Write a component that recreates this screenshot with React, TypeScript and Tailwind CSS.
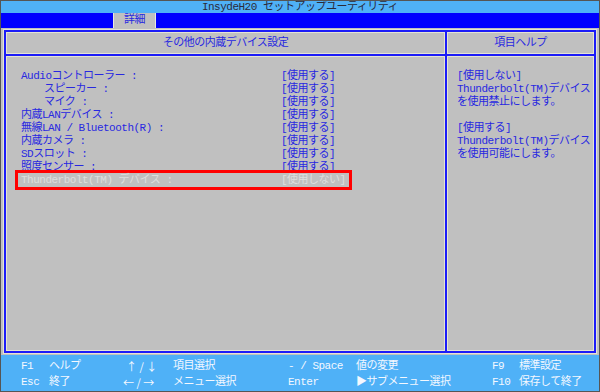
import React from "react";

const font = {
  fontFamily: '"Liberation Mono", "Noto Sans CJK JP", monospace',
};

interface Item {
  label: string;
  value: string;
  indent?: boolean;
}

const items: Item[] = [
  { label: "Audioコントローラー :", value: "[使用する]" },
  { label: "スピーカー :", value: "[使用する]", indent: true },
  { label: "マイク :", value: "[使用する]", indent: true },
  { label: "内蔵LANデバイス :", value: "[使用する]" },
  { label: "無線LAN / Bluetooth(R) :", value: "[使用する]" },
  { label: "内蔵カメラ :", value: "[使用する]" },
  { label: "SDスロット :", value: "[使用する]" },
  { label: "照度センサー :", value: "[使用する]" },
];

const helpLines = [
  "[使用しない]",
  "Thunderbolt(TM)デバイス",
  "を使用禁止にします。",
  "",
  "[使用する]",
  "Thunderbolt(TM)デバイス",
  "を使用可能にします。",
];

const Arrows = ({ a, b }: { a: string; b: string }) => (
  <span className="font-['Noto_Sans_CJK_JP'] tracking-normal">
    {a} / {b}
  </span>
);

const keys: React.ReactNode[][] = [
  ["F1", "ヘルプ", <Arrows a="↑" b="↓" />, "項目選択", "- / Space", "値の変更", "F9", "標準設定"],
  ["Esc", "終了", <Arrows a="←" b="→" />, "メニュー選択", "Enter", "▶サブメニュー選択", "F10", "保存して終了"],
];

const App: React.FC = () => {
  return (
    <div
      className="w-[600px] h-[392px] flex flex-col border border-[#555] text-[11px] tracking-[-0.5px] overflow-hidden"
      style={font}
    >
      {/* title */}
      <div className="h-[12px] bg-[#4fb1f7] text-[#2a2a3a] flex items-center justify-center leading-[12px]">
        InsydeH20 セットアップユーティリティ
      </div>

      {/* tab bar */}
      <div className="h-[15px] bg-[#0000ff] flex">
        <div className="ml-[112px] w-[43px] bg-[#c0c0c0] text-[#2828e0] flex items-center justify-center leading-[15px] border-x border-[#e8e8e0]">
          詳細
        </div>
      </div>

      {/* main */}
      <div className="flex-1 bg-[#c0c0c0] px-[3px] pt-[2px] pb-[2px] flex">
        <div className="flex-1 grid grid-cols-[441px_1fr] grid-rows-[24px_1fr] border-2 border-[#1c1cf8] shadow-[0_0_0_1px_#e4e4d4,inset_0_0_0_1px_#e4e4d4] text-[#2828e0]">
          <div className="border-r-2 border-b-2 border-[#1c1cf8] flex items-center justify-center pt-[1px] shadow-[inset_-1px_-1px_0_#e4e4d4]">
            その他の内蔵デバイス設定
          </div>
          <div className="border-b-2 border-[#1c1cf8] flex items-center justify-center pt-[1px] shadow-[inset_1px_-1px_0_#e4e4d4]">
            項目ヘルプ
          </div>

          <div className="border-r-2 border-[#1c1cf8] pl-[15px] pt-[14px] shadow-[inset_-1px_1px_0_#e4e4d4] leading-[13px]">
            {items.map((it) => (
              <div key={it.label} className="grid grid-cols-[260px_1fr] h-[13px] whitespace-nowrap">
                <span className={it.indent ? "pl-[23px]" : ""}>{it.label}</span>
                <span>{it.value}</span>
              </div>
            ))}
            <div className="relative -ml-[6px] w-[337px] -mt-[4px] border-[3px] border-[#ff0000] pl-[3px] pt-[1px] h-[20px]">
              <div className="grid grid-cols-[260px_1fr] h-[13px] whitespace-nowrap text-[#dedede]">
                <span>Thunderbolt(TM) デバイス :</span>
                <span>[使用しない]</span>
              </div>
            </div>
          </div>

          <div className="pl-[10px] pt-[14px] leading-[13px] shadow-[inset_1px_1px_0_#e4e4d4]">
            {helpLines.map((l, i) => (
              <div key={i} className="h-[13px] whitespace-nowrap">
                {l}
              </div>
            ))}
          </div>
        </div>
      </div>

      {/* status */}
      <div className="h-[36px] bg-[#4fb1f7] text-[#f4f8ff] pl-[20px] pt-[3px] leading-[16px]">
        {keys.map((row, r) => (
          <div
            key={r}
            className="grid grid-cols-[28px_74px_50px_115px_68px_136px_27px_1fr] h-[16px] whitespace-nowrap"
          >
            {row.map((c, i) => (
              <span key={i} className={r === 0 && i === 2 ? "pl-[3px]" : ""}>
                {c}
              </span>
            ))}
          </div>
        ))}
      </div>
    </div>
  );
};

export default App;
